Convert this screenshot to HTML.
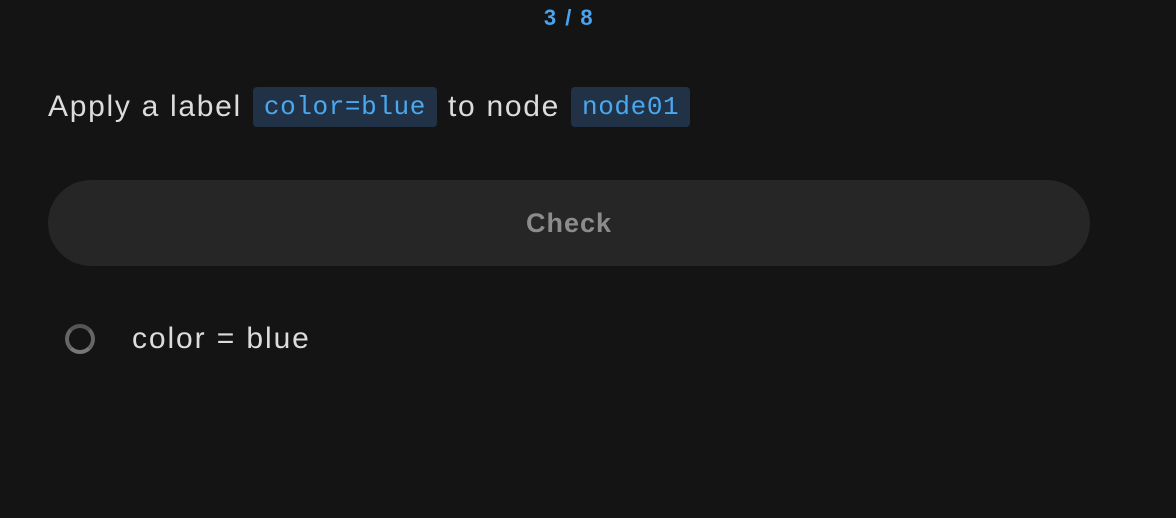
<!DOCTYPE html>
<html><head><style>
body{margin:0;background:#141414;width:1176px;height:518px;overflow:hidden;font-family:"Liberation Sans",sans-serif;position:relative}
.cnt{position:absolute;top:5px;left:0;width:1138px;text-align:center;color:#4aa3ee;font:bold 22px "Liberation Sans",sans-serif;letter-spacing:1.5px}
.q{position:absolute;left:48px;top:87px;height:40px;line-height:40px;color:#dcdcdc;font-size:30px;white-space:nowrap;letter-spacing:1.7px}
.c{display:inline-block;background:#213246;color:#4aa8f0;font:26px "Liberation Mono",monospace;padding:0 11px;border-radius:4px;height:40px;line-height:40px;vertical-align:top;letter-spacing:0.6px;margin:0 1px}
.btn{position:absolute;left:48px;top:180px;width:1042px;height:86px;border-radius:43px;background:#262626;color:#8c8c8c;font-weight:bold;font-size:27px;text-align:center;line-height:86px;letter-spacing:1px}
.ring{position:absolute;left:65px;top:324px;width:22px;height:22px;border-radius:50%;border:4px solid #666;border-top-color:#555;border-bottom-color:#777}
.it{position:absolute;left:132px;top:320px;color:#dcdcdc;font-size:30px;line-height:38px;letter-spacing:1.9px}
</style></head><body>
<div class="cnt">3 / 8</div>
<div class="q">Apply a label <span class="c">color=blue</span> to node <span class="c">node01</span></div>
<div class="btn">Check</div>
<div class="ring"></div>
<div class="it">color = blue</div>
</body></html>
